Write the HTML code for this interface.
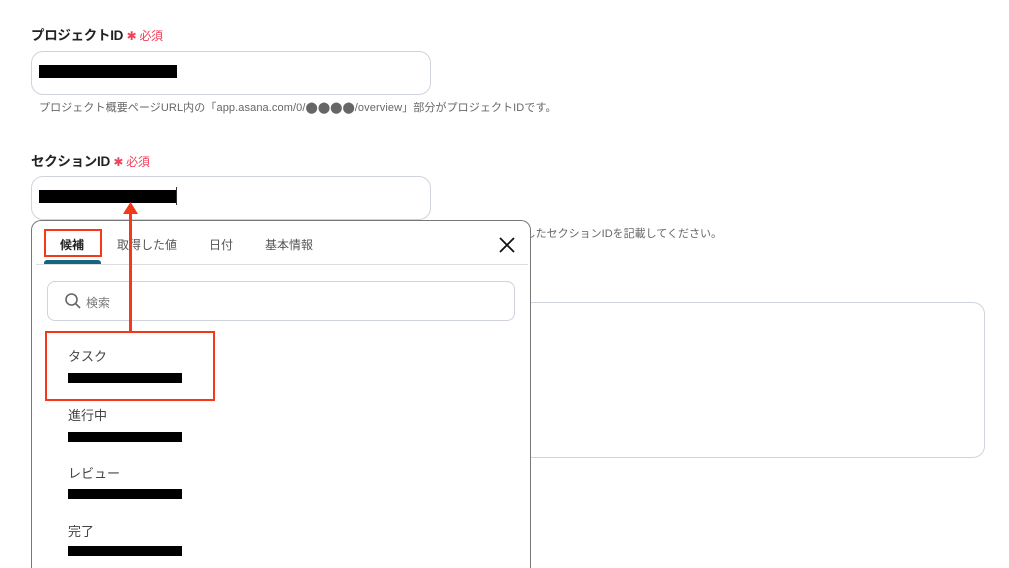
<!DOCTYPE html>
<html style="width:1009px;height:568px;overflow:hidden"><head><meta charset="utf-8"><style>
*{box-sizing:border-box;margin:0;padding:0}
body{width:1009px;height:568px;overflow:hidden;background:#fff;position:relative;font-family:"Liberation Sans","Noto Sans CJK JP",sans-serif;color:#333}
.abs{position:absolute}
.lbl{font-size:13.5px;font-weight:bold;color:#222;letter-spacing:-0.3px}
.req{color:#f0415a;font-size:12px;font-weight:normal}
.inp{border:1px solid #cfd3da;border-radius:12px;background:#fff}
.bar{background:#000;height:13px}
.help{font-size:11px;color:#666;white-space:nowrap}
.tab{font-size:12px;color:#555;top:236px}
.item{font-size:13px;color:#444;left:68px}
.rb{background:#000;height:10px;left:68px;width:114px}
</style></head><body>
<div class="abs lbl" style="left:31px;top:24px">プロジェクトID <span class="req">✱ 必須</span></div>
<div class="abs inp" style="left:31px;top:51px;width:400px;height:44px"></div>
<div class="abs bar" style="left:39px;top:65px;width:138px"></div>
<div class="abs help" style="left:39px;top:99px;letter-spacing:0.1px">プロジェクト概要ページURL内の「app.asana.com/0/<span style="font-size:11px;letter-spacing:0">⬤⬤⬤⬤</span>/overview」部分がプロジェクトIDです。</div>

<div class="abs lbl" style="left:31px;top:150px">セクションID <span class="req">✱ 必須</span></div>
<div class="abs inp" style="left:31px;top:176px;width:400px;height:44px"></div>
<div class="abs bar" style="left:39px;top:190px;width:137px"></div>
<div class="abs" style="left:176px;top:187px;width:1px;height:18px;background:#333"></div>
<div class="abs help" style="right:287px;top:225px">認したセクションIDを記載してください。</div>

<div class="abs inp" style="left:520px;top:302px;width:465px;height:156px"></div>

<div class="abs" style="left:31px;top:220px;width:500px;height:348px;border:1px solid #777;border-bottom:none;border-radius:10px 10px 0 0;background:#fff"></div>
<div class="abs tab" style="left:60px;color:#222;font-weight:bold">候補</div>
<div class="abs tab" style="left:117px">取得した値</div>
<div class="abs tab" style="left:209px">日付</div>
<div class="abs tab" style="left:265px">基本情報</div>
<div class="abs" style="left:44px;top:260px;width:57px;height:5px;background:#16657e;border-radius:3px 3px 0 0"></div>
<div class="abs" style="left:36px;top:264px;width:492px;height:1px;background:#ddd"></div>
<svg class="abs" style="left:498px;top:236px" width="18" height="18" viewBox="0 0 18 18"><path d="M2 2L16 16M16 2L2 16" stroke="#111" stroke-width="1.8"/></svg>
<div class="abs inp" style="left:47px;top:281px;width:468px;height:40px;border-radius:8px"></div>
<svg class="abs" style="left:64px;top:292px" width="18" height="18" viewBox="0 0 18 18"><circle cx="7.5" cy="7.5" r="5.5" fill="none" stroke="#666" stroke-width="1.6"/><path d="M11.5 11.5L16 16" stroke="#666" stroke-width="1.6"/></svg>
<div class="abs" style="left:86px;top:294px;font-size:12px;color:#777">検索</div>

<div class="abs item" style="top:346px">タスク</div><div class="abs rb" style="top:373px"></div>
<div class="abs item" style="top:405px">進行中</div><div class="abs rb" style="top:432px"></div>
<div class="abs item" style="top:463px">レビュー</div><div class="abs rb" style="top:489px"></div>
<div class="abs item" style="top:521px">完了</div><div class="abs rb" style="top:546px"></div>

<div class="abs" style="left:44px;top:229px;width:58px;height:28px;border:2px solid #f5381a"></div>
<div class="abs" style="left:45px;top:331px;width:170px;height:70px;border:2px solid #f5381a"></div>
<div class="abs" style="left:129px;top:210px;width:3px;height:121px;background:#f5381a"></div>
<svg class="abs" style="left:123px;top:202px" width="15" height="12"><path d="M7.5 0L15 12H0Z" fill="#f5381a"/></svg>
</body></html>
